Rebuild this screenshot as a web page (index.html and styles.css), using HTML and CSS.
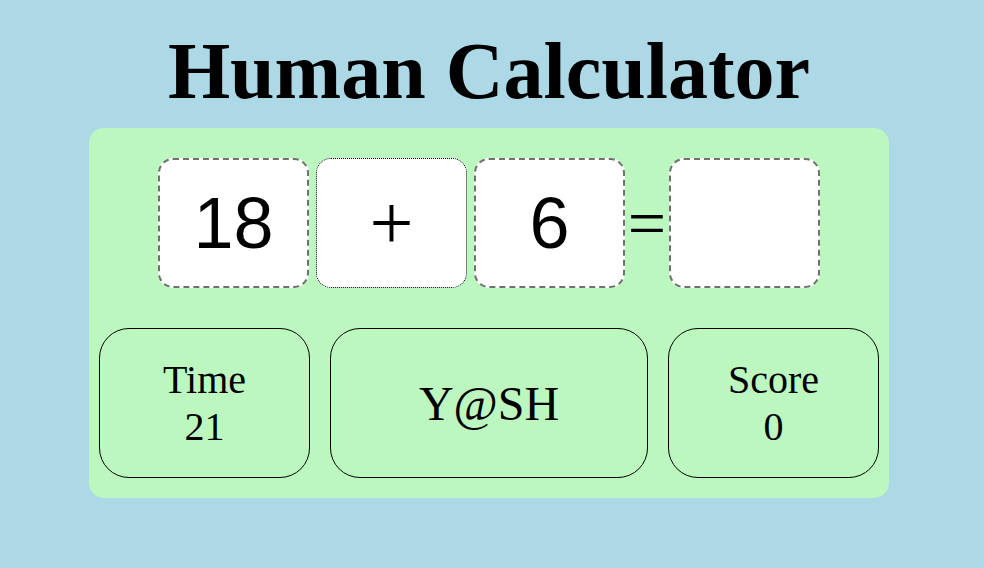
FILE: index.html
```html
<!DOCTYPE html>
<html>
<head>
<meta charset="utf-8">
<link rel="stylesheet" href="styles.css">
</head>
<body>
<div class="page">
  <h1 class="title">Human Calculator</h1>
  <div class="panel">
    <div class="equation">
      <div class="cell">18</div>
      <div class="cell op">+</div>
      <div class="cell">6</div>
      <div class="equals">=</div>
      <div class="cell"></div>
    </div>
    <div class="stats">
      <div class="stat side">Time<br>21</div>
      <div class="stat name">Y@SH</div>
      <div class="stat side">Score<br>0</div>
    </div>
  </div>
</div>
</body>
</html>
```
FILE: styles.css
```css
html, body {
  margin: 0;
  padding: 0;
  background: #add8e6;
}
body {
  font-family: "Liberation Serif", "Times New Roman", serif;
}
.page {
  padding-right: 6px;
}
.title {
  margin: 27px 0 12px;
  text-align: center;
  font-size: 80px;
  line-height: 89px;
  font-weight: bold;
}
.panel {
  width: 800px;
  box-sizing: border-box;
  margin: 0 auto;
  background: #bdf7c0;
  border-radius: 15px;
  padding: 30px 10px 20px;
}
.equation {
  display: flex;
  justify-content: center;
  align-items: center;
  gap: 7px;
  height: 130px;
}
.cell {
  box-sizing: border-box;
  width: 151px;
  height: 130px;
  background: #fff;
  border: 2px dashed #707070;
  border-radius: 15px;
  display: flex;
  align-items: center;
  justify-content: center;
  font-family: "Liberation Sans", Arial, sans-serif;
  font-size: 72px;
}
.cell.op {
  border: 1px dotted #000;
  font-family: "Liberation Serif", "Times New Roman", serif;
  font-size: 78px;
}
.equals {
  width: 30px;
  display: flex;
  justify-content: center;
  font-size: 68px;
  line-height: 1;
}
.stats {
  display: flex;
  gap: 20px;
  margin-top: 40px;
}
.stat {
  box-sizing: border-box;
  height: 150px;
  border: 1px solid #000;
  border-radius: 30px;
  display: flex;
  align-items: center;
  justify-content: center;
  text-align: center;
  font-size: 40px;
}
.side {
  width: 211px;
  flex: none;
}
.name {
  flex: 1;
  font-size: 48px;
}
```
